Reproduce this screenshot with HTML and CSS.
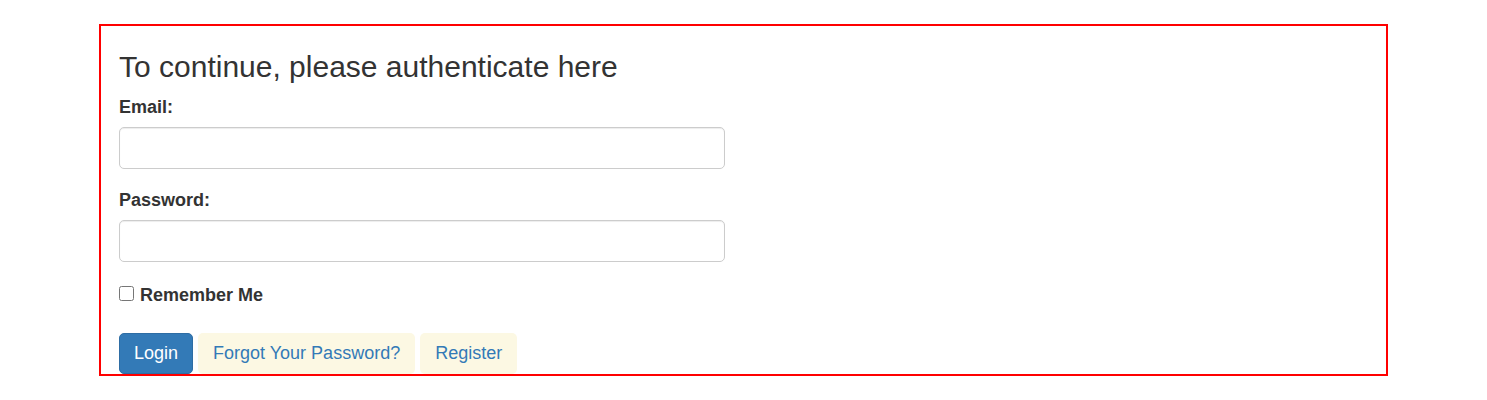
FILE: index.html
```html
<!DOCTYPE html>
<html lang="en">
<head>
<meta charset="utf-8">
<meta name="viewport" content="width=device-width, initial-scale=1">
<title>Authenticate</title>
<link rel="stylesheet" href="styles.css">
</head>
<body>
<main class="panel">
  <h1 class="title">To continue, please authenticate here</h1>
  <form class="login-form">
    <div class="field">
      <label class="label" for="email">Email:</label>
      <input class="control" type="email" id="email">
    </div>
    <div class="field">
      <label class="label" for="password">Password:</label>
      <input class="control" type="password" id="password">
    </div>
    <div class="remember">
      <input class="checkbox" type="checkbox" id="remember">
      <label class="label" for="remember">Remember Me</label>
    </div>
    <div class="actions">
      <button class="btn btn-primary" type="submit">Login</button>
      <a class="btn btn-soft" href="#">Forgot Your Password?</a>
      <a class="btn btn-soft" href="#">Register</a>
    </div>
  </form>
</main>
</body>
</html>
```
FILE: styles.css
```css
* {
  box-sizing: border-box;
}

body {
  margin: 24px 99px;
  background: #fff;
  color: #333;
  font-family: "Liberation Sans", Arial, sans-serif;
  font-size: 18px;
  line-height: 26px;
}

.panel {
  padding: 24px 18px 0;
  border: 2px solid #f00;
}

.title {
  margin: 0 0 11px;
  font-size: 30px;
  font-weight: 400;
  line-height: 33px;
}

.login-form {
  display: flex;
  flex-direction: column;
}

.field {
  display: flex;
  flex-direction: column;
  gap: 7px;
  width: 48.5%;
  margin-bottom: 18px;
}

.label {
  font-weight: 700;
}

.control {
  width: 100%;
  height: 42px;
  padding: 7px 15px;
  border: 1px solid #ccc;
  border-radius: 5px;
  background: #fff;
  box-shadow: inset 0 1px 1px rgba(0, 0, 0, 0.075);
  color: #555;
  font: inherit;
}

.remember {
  display: flex;
  align-items: flex-start;
  gap: 6px;
  margin: 2px 0 25px;
}

.checkbox {
  width: 15px;
  height: 15px;
  margin: 4px 0 0;
}

.actions {
  display: flex;
  gap: 5px;
}

.btn {
  padding: 7px 14px;
  border: 1px solid transparent;
  border-radius: 5px;
  font: inherit;
  line-height: 25px;
  text-decoration: none;
}

.btn-primary {
  border-color: #2e6da4;
  background: #337ab7;
  color: #fff;
}

.btn-soft {
  background: #fcf8e3;
  color: #337ab7;
}
```
